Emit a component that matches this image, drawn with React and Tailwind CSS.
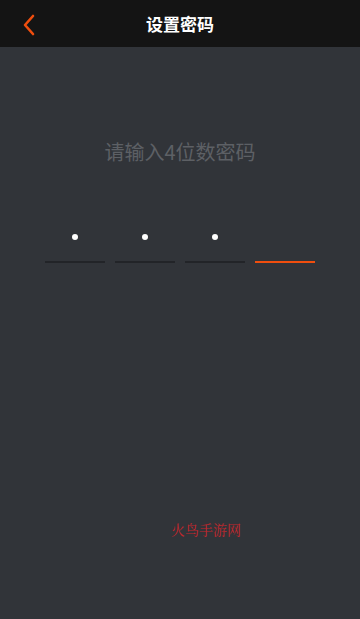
import React from "react";

function App() {
  const filled = 3;
  return (
    <div
      className="w-full min-h-screen bg-[#313439] flex flex-col"
      style={{ fontFamily: '"Noto Sans CJK SC", "Noto Sans", sans-serif' }}
    >
      {/* Header */}
      <div className="h-[47px] bg-[#141414] flex items-center relative">
        <button className="absolute left-[21px] top-[13px] w-[16px] h-[24px] flex items-center justify-center">
          <svg width="14" height="22" viewBox="0 0 14 22" fill="none">
            <path d="M11 2 L3 11 L11 20" stroke="#f04e0e" strokeWidth="2.6" strokeLinecap="round" strokeLinejoin="round" />
          </svg>
        </button>
        <h1 className="w-full text-center text-white text-[17px] font-bold">设置密码</h1>
      </div>

      {/* Body */}
      <div className="flex flex-col items-center">
        <p className="mt-[90px] text-[20px] leading-[30px] text-[#5d6065]">请输入4位数密码</p>

        <div className="mt-[60px] flex gap-[10px]">
          {[0, 1, 2, 3].map((i) => (
            <div key={i} className="w-[60px] flex flex-col items-center">
              <div className="h-[20px] flex items-center justify-center">
                {i < filled && <span className="w-[6px] h-[6px] rounded-full bg-white" />}
              </div>
              <div
                className={
                  i === filled
                    ? "mt-[14px] w-full h-[2px] bg-[#f04e0e]"
                    : "mt-[14px] w-full h-[2px] bg-[#222428]"
                }
              />
            </div>
          ))}
        </div>

        <p
          className="mt-[256px] ml-[52px] text-[14px] text-[#c1272d]"
          style={{ fontFamily: '"Noto Serif CJK SC", "Noto Sans CJK SC", serif' }}
        >
          火鸟手游网
        </p>
      </div>
    </div>
  );
}

export default App;
